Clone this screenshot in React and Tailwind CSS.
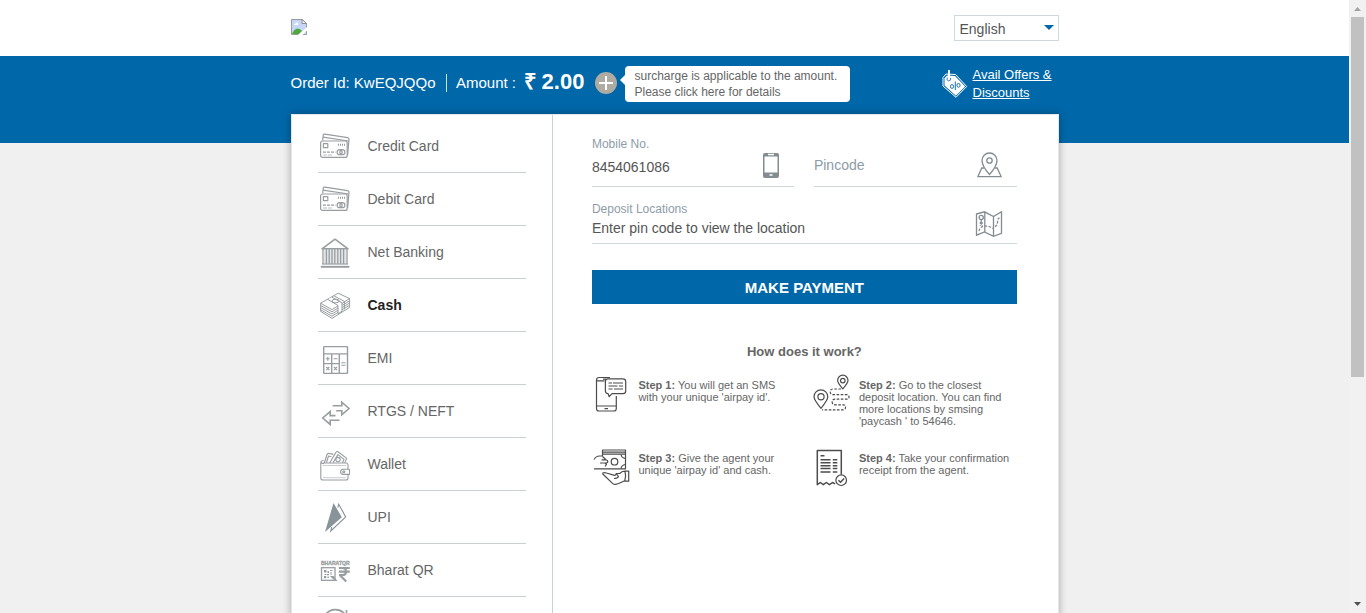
import React from 'react';

const line = { fill: 'none', stroke: 'currentColor', strokeWidth: 1.2, strokeLinejoin: 'round' };

function CardsIcon() {
  return (
    <g {...line}>
      <path d="M4.7 11.5 5.2 6.2Q5.5 5 6.8 5.2L29.7 8.6Q31.2 9 31 10.5L29.6 26" />
      <path d="M5 8.2 30.6 12" />
      <rect x="2.6" y="12" width="26.6" height="16.4" rx="2" />
      <rect x="5.4" y="14.6" width="4.4" height="4" />
      <path d="M20 15.8h7" strokeDasharray="1 1" strokeWidth="2" />
      <path d="M5 23.2h12.5" strokeDasharray="3 1" />
      <path d="M5 26h10" strokeDasharray="4 1" strokeWidth=".7" />
      <circle cx="21.6" cy="23.2" r="2.5" />
      <circle cx="24.4" cy="23.2" r="2.5" />
    </g>
  );
}

function BankIcon() {
  return (
    <g {...line}>
      <path d="M6 15h22v13H6z" fill="#e4e6e7" stroke="none" />
      <path d="M17 4.2 4 13.8h26z" strokeWidth="1.6" />
      <path d="M5 14v15M29 14v15M8.4 14v15M11.2 14v15M14 14v15M16.8 14v15M19.8 14v15M22.6 14v15M25.6 14v15" strokeWidth="1.3" />
      <path d="M4 29h26" />
      <path d="M2.8 31.8h28.6" strokeWidth="1.9" />
    </g>
  );
}

function CashIcon() {
  return (
    <g {...line} strokeWidth="1">
      <path d="M2.6 15.2 20.2 5.2 31.6 10.6 14 21.6z" />
      <path d="M2.6 15.2v2.2L14 23.8l17.6-11v-2.2M2.6 17.4v2.2L14 26l17.6-11v-2.2M2.6 19.6v2.2L14 28.2l17.6-11V15M2.6 21.8v1.6L14 30.4l17.6-11v-2.2" />
      <path d="M13.6 9 24 14.8v8.4l-4 2.5v-8.2L9.8 11.4" fill="white" />
      <path d="m15.8 7.8 10.6 5.6v8" />
      <ellipse cx="17.6" cy="13" rx="3.6" ry="1.8" />
    </g>
  );
}

function CalculatorIcon() {
  return (
    <g {...line} strokeWidth="1.4">
      <rect x="5.7" y="5.6" width="23.8" height="26.8" rx=".6" />
      <path d="M5.7 12.9h23.8M13.7 12.9v19.5M21.3 12.9v19.5M5.7 22.6h15.6" />
      <path d="M7.8 17.8h4M9.8 15.8v4M15.6 17.8h3.8M8.3 26l3 3M11.3 26l-3 3M16 26l3 3M19 26l-3 3M23.3 21.8h4.2M23.3 24.2h4.2" strokeWidth="1.1" />
    </g>
  );
}

function TransferIcon() {
  return (
    <g {...line} strokeWidth="1.6" strokeLinejoin="miter">
      <path d="M14.7 11.8h9.100V8.200l7.200 6.300-7.200 6.300v-4h-5.600" />
      <path d="M17.500 21.600h-5.300v-4L4.700 24l7.500 6.400v-4.100h9.300" />
    </g>
  );
}

function WalletIcon() {
  return (
    <g {...line} strokeWidth="1.1">
      <path d="M6.3 16 9 7.5Q9.5 6 11 6.4l4.4 1M8.5 15.5l2-6.5 3 .7M11.6 16 18 5.2q.8-1.1 2-.4l8.7 6.6-2 4.5M15 15.6l5-8 6 4.8-1.6 3.3" />
      <circle cx="20" cy="12.6" r="2.2" />
      <path d="M5 16h23q2 0 2 2v4.2M30 27.4V31q0 2-2 2H5q-2.2 0-2.2-2V15.500q0-2 2.800-2M2.800 15q.5 1.600 3 1.600" />
      <path d="M5 18.500h23M5 30.700h23" strokeWidth=".5" />
      <path d="M31.500 22.200h-6.300a2.600 2.600 0 0 0 0 5.200h6.300z" />
      <circle cx="25.800" cy="24.800" r="1" />
    </g>
  );
}

function UpiIcon() {
  return (
    <g>
      <path d="M19.800 7.500 20.700 4.200 27.700 17 12.800 31 13.700 27.200" fill="none" stroke="#89939a" strokeWidth="1.100" />
      <path d="M15.500 3 23.800 17.200 7 32z" fill="#89939a" />
    </g>
  );
}

function BharatQrIcon() {
  return (
    <g fill="currentColor">
      <text x="2.900" y="11.800" fontSize="5" fontWeight="bold" textLength="28.800" lengthAdjust="spacingAndGlyphs" fontFamily="Liberation Sans" stroke="currentColor" strokeWidth=".3">
        BHARATQR
      </text>
      <rect x="3.500" y="14.700" width="13.500" height="12.600" fill="none" stroke="currentColor" strokeWidth="1.300" />
      <path d="M6 17h2.500v2.500H6zM12 17h2.500v1H12zM9.500 18h1.500v2H9.500zM12.500 19h1v3h-1zM6.500 21h2v1h-2zM9 21h2v1.300H9zM6 23h2.300v2.300H6zM9.500 23.600h1.400v1.400H9.500zM12 23h3.500l4 5h-2.200l-3.800-3.300z" />
      <path d="M20.800 15h11M20.800 18.700h11M21 22h3.300q3.700 0 3.700-3.600T24.300 15M22 22.300l6.200 6.200" fill="none" stroke="currentColor" strokeWidth="2.200" />
    </g>
  );
}

function RefreshIcon() {
  return (
    <g {...line} strokeWidth="1.600">
      <path d="M7 9.500A12 12 0 0 1 27 8.500M28.500 4v6h-6" />
    </g>
  );
}

const methods = [
  { name: 'Credit Card', icon: CardsIcon },
  { name: 'Debit Card', icon: CardsIcon },
  { name: 'Net Banking', icon: BankIcon },
  { name: 'Cash', icon: CashIcon, active: true },
  { name: 'EMI', icon: CalculatorIcon },
  { name: 'RTGS / NEFT', icon: TransferIcon },
  { name: 'Wallet', icon: WalletIcon },
  { name: 'UPI', icon: UpiIcon },
  { name: 'Bharat QR', icon: BharatQrIcon },
  { name: '', icon: RefreshIcon },
];

function BrokenImage() {
  return (
    <svg className="mt-[19px] h-4 w-4" viewBox="0 0 16 16">
      <path d="M.5.500h11l4 4v11H.500z" fill="#c6d6f7" stroke="#9a9a9a" />
      <path d="M3 6q0-1.500 1.500-1.500Q5 3 6.300 3.600 7.500 4 7.500 6z" fill="white" />
      <path d="M1 15q2-5 5.500-5.500Q9.500 9.500 11 12l-3 3z" fill="#4fa83a" />
      <path d="M11 .500v4h4.500z" fill="white" stroke="#8f8f8f" />
      <path d="m7 16 9-8v3.500L11.500 16z" fill="white" />
    </svg>
  );
}

function TagIcon() {
  return (
    <svg className="mt-[14px] h-7 w-[26px] shrink-0" viewBox="0 0 26 28" fill="none">
      <path d="M1 16V7.500L4 4l9.500.500L24.700 16.500 14 27.300z" stroke="white" strokeWidth="1" strokeLinejoin="round" />
      <path d="M2.500 15.400V8.200L5 5.500l8 .6L23.200 16.500 13.900 25.800z" fill="white" />
      <path d="M7 0v9" stroke="white" strokeWidth="2" />
      <path d="M5.200 7.500q-1 3.200 1.500 3.400 2.300 0 2-3" stroke="#0067a9" strokeWidth=".8" />
      <path d="M13.300 11.500v8.500" stroke="#0067a9" strokeWidth=".9" />
      <ellipse cx="10" cy="16.500" rx="1.600" ry="1.900" stroke="#0067a9" strokeWidth=".9" />
      <ellipse cx="16.500" cy="15.300" rx="1.600" ry="1.900" stroke="#0067a9" strokeWidth=".9" />
    </svg>
  );
}

function SmsIcon() {
  return (
    <>
      <path d="M18 3.500H7Q4.500 3.500 4.500 6v28.500Q4.500 37 7 37h15q2.300 0 2.300-2.500V22M4.500 6.800h8M4.500 32h19.800M12.500 34.600h3.500M11 5.200h3" />
      <path d="M16 4.800h15q2.700 0 2.700 2.600v9.600q0 2.700-2.700 2.700H20l-2.800 3-1.200-3.200q-2.600 0-2.600-2.500V7.400q0-2.600 2.600-2.600z" />
      <path d="M16.500 9h3.500m1 0h10M16.500 12h9m1.500 0h4M16.500 15h4m1.500 0h9" />
    </>
  );
}

function RouteIcon() {
  return (
    <>
      <path d="M9 34.300Q2 26 2 22.800a6.900 6.900 0 0 1 13.800 0Q15.800 26 9 34.300z" />
      <circle cx="9" cy="22.800" r="3.100" />
      <path d="M30.800 14.800q-5.200-6-5.200-8.400a5.200 5.200 0 0 1 10.400 0q0 2.400-5.200 8.400z" />
      <circle cx="30.800" cy="6.600" r="2.300" />
      <path d="M29 15H21q-2.800 0-2.800 2.800T21 20.700h13.500q2.500 0 2.500 2.200t-2.500 2.300H23q-2.800 0-2.800 2.800T23 30.800h8.500q2 0 2 2.500t-2 2.600H10" strokeDasharray="2.600 1.500" />
    </>
  );
}

function HandoverIcon() {
  return (
    <>
      <path d="M2 12.500Q4 9 7.500 9h3M2 21.800h31.500V7.200H10.500V9M10.500 7V5.200h23v2.300M10.500 5V3h23v2.500M10.500 9.500l3.500 3.300H9.500M8 16h5.500q2.300 0 2.300-1.500T14 13M13 16l1.500 1.500-1.500 2" />
      <circle cx="22.500" cy="14.700" r="3.300" />
      <path d="M29 7.500q.5 3.500 4.300 4M29 21.500q.5-3.500 4.300-4M10.500 26q2-.8 4 0l8 2.300q1.500 0 1.700-1.500M22 31.500q3.500 0 4.500-2l-2.300-3h3.500q2-2.300 5-2.300h4v10h-5q-3 1.300-7.200 3-2 .5-4-.8L10.300 26.500M33 24.500q1.500 5-.3 9.500" />
    </>
  );
}

function ReceiptIcon() {
  return (
    <>
      <path d="M29.300 27.500V3.500H5.300v34.200l3-2.200 3 2.200 3-2.200 3.200 2.200 3-2.200 2.500 1.400" strokeWidth="1.500" />
      <path d="M8.500 8.800h4M8.500 12.700h10M20.800 12.700h4.500M8.500 15.700h10M20.800 15.700h4.500M8.500 18.700h10M20.800 18.700h4.500M8.500 21.500h10M20.800 21.500h4.500M8.500 25h10M20.800 25h4.500" strokeWidth="1.400" />
      <circle cx="29.200" cy="33.200" r="5.300" fill="white" />
      <path d="m26.500 33.200 2 2 3.600-3.700" strokeWidth="1.500" />
    </>
  );
}

function Step({ icon: Icon, n, children }) {
  return (
    <div className="flex h-[73px] items-start">
      <svg className="h-10 w-10 shrink-0" viewBox="0 0 40 40" fill="none" stroke="#4c4c4c" strokeWidth="1.200" strokeLinejoin="round">
        <Icon />
      </svg>
      <p className="whitespace-nowrap pl-[6.500px] pt-[5px] text-[11px] leading-[12px]">
        <b>Step {n}:</b> {children}
      </p>
    </div>
  );
}

export default function App() {
  return (
    <div className="flex h-[613px] w-[1366px] overflow-hidden bg-[#f0f0f0] font-['Liberation_Sans',Arial,sans-serif] text-[#666]">
      <div className="flex w-[1349px] shrink-0 flex-col">
        <header className="h-14 shrink-0 bg-white">
          <div className="mx-auto flex w-[768px] items-start justify-between">
            <BrokenImage />
            <div className="mt-[15px] flex h-[26px] w-[105px] items-center justify-between border border-[#cfd8dc] pl-[5px] pr-1 pt-0.5 text-[14px] leading-4 text-[#555]">
              <span>English</span>
              <svg className="mb-[3px] h-[5px] w-[10px]" viewBox="0 0 10 5"><path d="M0 0h10L5 5z" fill="#0067a9" /></svg>
            </div>
          </div>
        </header>
        <section className="h-[87px] shrink-0 bg-[#0067a9] text-white">
          <div className="mx-auto flex w-[768px] items-start">
            <p className="mt-[18px] w-[155px] whitespace-nowrap text-[15px] leading-[18px]">Order Id: KwEQJQQo</p>
            <p className="mt-[18px] h-[18px] w-[78px] whitespace-nowrap border-l border-white/80 pl-[9.500px] text-[15px] leading-[18px]">Amount :</p>
            <p className="mt-[14px] w-[71px] whitespace-nowrap text-[22px] font-bold leading-6 [word-spacing:-1px]">₹ 2.00</p>
            <svg className="mt-4 h-[22px] w-[22px]" viewBox="0 0 22 22">
              <circle cx="11" cy="11" r="11" fill="#aeaba3" />
              <path d="M11 4v14M4 11h14" stroke="white" strokeWidth="2" />
            </svg>
            <svg className="mt-[19px] ml-[3px] h-[10px] w-[5px]" viewBox="0 0 5 10"><path d="M5 0v10L0 5z" fill="white" /></svg>
            <p className="mt-2.5 h-9 w-[225px] whitespace-nowrap rounded-sm bg-white pl-2.5 pt-0.5 text-[12px] leading-4 text-[#666]">
              surcharge is applicable to the amount.<br />Please click here for details
            </p>
            <div className="ml-[92px] flex">
              <TagIcon />
              <p className="ml-[5px] mt-[10px] whitespace-nowrap text-[13px] leading-[18px] underline">Avail Offers &amp;<br />Discounts</p>
            </div>
          </div>
        </section>
        <main className="mx-auto -mt-[29px] flex h-[600px] w-[768px] shrink-0 border border-[#e3e8ea] bg-white shadow-[0_0_8px_rgba(0,0,0,0.3)]">
          <nav className="w-[261px] shrink-0 border-r border-[#cad1d5] pl-[26px] pt-[5px]">
            {methods.map(({ name, icon: Icon, active }, i) => (
              <div key={i} className="flex h-[53px] w-[208px] border-b border-[#c8d0d4]">
                <svg className="mt-[9px] h-[34px] w-[34px] text-[#989da0]" viewBox="0 0 34 34"><Icon /></svg>
                <span className={active ? 'ml-4 mt-[18px] text-[14px] font-bold leading-4 text-[#222]' : 'ml-4 mt-[18px] text-[14px] leading-4'}>{name}</span>
              </div>
            ))}
          </nav>
          <div className="w-[465px] pl-[39.4px]">
            <div className="flex gap-5">
              <div className="flex h-[72px] w-[202px] justify-between border-b border-[#cfd8dc]">
                <div className="pt-[22px]">
                  <label className="block text-[12px] leading-[14px] text-[#8d9ca8]">Mobile No.</label>
                  <div className="mt-2 text-[14px] leading-4 text-[#555]">8454061086</div>
                </div>
                <svg className="mr-[15px] mt-[38px] h-[25px] w-4" viewBox="0 0 16 25">
                  <rect width="16" height="25" rx="2" fill="#838c90" />
                  <path d="M1.500 3.500h13v16h-13z" fill="white" />
                  <path d="M5 1.500h6M6.500 22h3" stroke="white" strokeWidth="1.300" />
                </svg>
              </div>
              <div className="flex h-[72px] w-[203px] justify-between border-b border-[#cfd8dc]">
                <span className="mt-[42px] text-[14px] leading-4 text-[#8d9ca8]">Pincode</span>
                <svg className="mr-[15px] mt-[37px] h-[26px] w-[25px]" viewBox="0 0 25 26" fill="none" stroke="#838c90" strokeWidth="1.300">
                  <path d="M12.500 22.500Q5 14 5 8.500a7.500 7.500 0 0 1 15 0q0 5.500-7.500 14z" />
                  <circle cx="12.500" cy="8.500" r="2.700" />
                  <path d="M7 16H4.800L.8 24.700h23.400L20.200 16H18" />
                </svg>
              </div>
            </div>
            <div className="flex h-[57px] w-[425px] justify-between border-b border-[#cfd8dc]">
              <div className="pt-[15px]">
                <label className="block text-[12px] leading-[14px] text-[#8d9ca8]">Deposit Locations</label>
                <div className="mt-1 text-[14px] leading-4 text-[#555]">Enter pin code to view the location</div>
              </div>
              <svg className="mr-[14px] mt-6 h-[26px] w-[28px]" viewBox="0 0 28 26" fill="none" stroke="#838c90" strokeWidth="1.300">
                <path d="M1.500 3 9.500.8l9 4.700 8-4.700v21.500l-8 3-9-4.300-8 3.200zM9.800 1v20M18.500 5.500v19.500" />
                <circle cx="6.200" cy="6.500" r="2.100" />
                <path d="M6.200 9v5m-1.500-2.500 3 3m0-3-3 3" />
                <path d="M4 20q1-4.500 5.500-5 5 0 8.500 2.500M20 15.500q2.500-1 2.500-4.500t2-4" strokeDasharray="2.500 1.500" />
              </svg>
            </div>
            <button className="mt-[26px] block h-[34px] w-[425px] bg-[#0067a9] pt-0.5 text-[15px] font-bold text-white">MAKE PAYMENT</button>
            <h2 className="mt-10 w-[425px] text-center text-[13px] font-bold leading-4">How does it work?</h2>
            <div className="mt-[14px] grid grid-cols-[220.5px_204.5px]">
              <Step icon={SmsIcon} n={1}>You will get an SMS<br />with your unique 'airpay id'.</Step>
              <Step icon={RouteIcon} n={2}>Go to the closest<br />deposit location. You can find<br />more locations by smsing<br />'paycash ' to 54646.</Step>
              <Step icon={HandoverIcon} n={3}>Give the agent your<br />unique 'airpay id' and cash.</Step>
              <Step icon={ReceiptIcon} n={4}>Take your confirmation<br />receipt from the agent.</Step>
            </div>
          </div>
        </main>
      </div>
      <aside className="flex w-[17px] shrink-0 flex-col items-center bg-[#f1f1f1]">
        <svg className="h-[17px] w-[17px]" viewBox="0 0 17 17"><path d="M5 11h7L8.500 7z" fill="#a3a3a3" /></svg>
        <div className="h-[360px] w-[13px] bg-[#c1c1c1]" />
        <svg className="mt-auto h-[17px] w-[17px]" viewBox="0 0 17 17"><path d="M5 6h7L8.500 10z" fill="#505050" /></svg>
      </aside>
    </div>
  );
}
